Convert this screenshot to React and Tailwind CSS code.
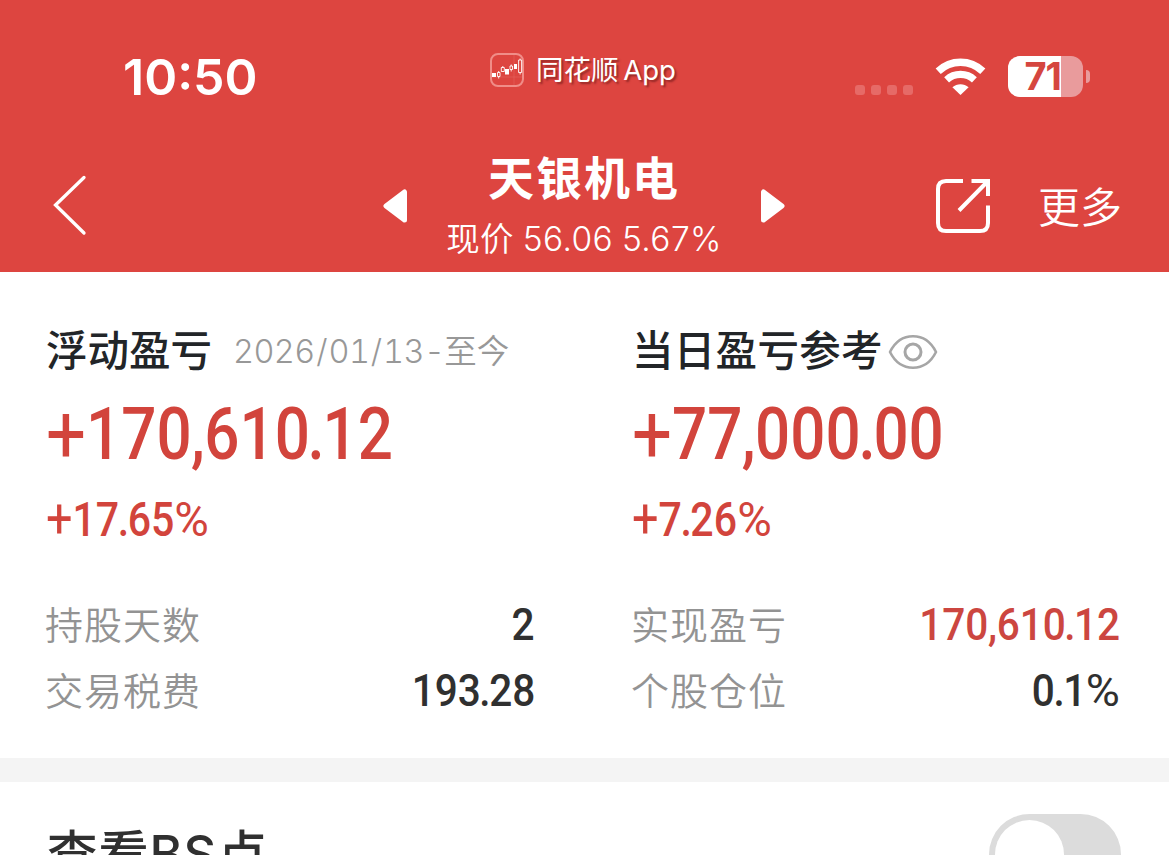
import React from 'react';

const cjk = "font-['Noto_Sans_CJK_SC',sans-serif]";
const mixed = "font-[Inter,'Noto_Sans_CJK_SC',sans-serif]";
const digits = "font-[Roboto,sans-serif]";

const charStyles = {
  '+': 'align-[-0.040em] text-[1.140em] font-normal leading-none',
  '.': '-mx-[0.036em]',
  ',': '-mx-[0.010em]',
  '%': 'inline-block w-[0.840em] origin-left scale-x-[1.150] font-normal',
};

// Narrow punctuation and wide signs around fixed width figures
function Figures({ value }) {
  return value.split('').map((char, i) => (
    <span key={i} className={charStyles[char]}>
      {char}
    </span>
  ));
}

function AppBadge() {
  return (
    <svg className="h-[34px] w-[34px]" viewBox="0 0 34 34" fill="none">
      <rect x="1" y="1" width="32" height="32" rx="7" stroke="#f08d88" strokeWidth="2" />
      <path d="M2 24H32M24 2V32" stroke="#e66660" strokeWidth="0.5" />
      <path d="M2 20h4v4H2zM15 16h4v5.500h-4zM24 11h3v5h-3z" fill="#fff" />
      <path d="M7.500 19.500h2.500v4H7.500zM8.700 18v1.500M8.700 23.500v2M11.300 14.500h3v4h-3zM12.800 13v1.500M20 13h2.500v3.500H20zM21.200 11.500v1.500M21.200 16.500v2M28.600 7h3v12.500h-3zM30.100 5.500v1.500M30.100 19.500v2" stroke="#fff" strokeWidth="0.9" />
    </svg>
  );
}

function WifiIcon() {
  return (
    <svg className="h-[38px] w-[51px]" viewBox="0 0 51 38" fill="none">
      <path d="M3.200 13.200C16 1.300 35 1.300 47.800 13.200" stroke="#fff" strokeWidth="7.500" />
      <path d="M11.600 21.800C19.500 14.600 31.500 14.600 39.400 21.800" stroke="#fff" strokeWidth="7.200" />
      <path d="M25.500 37L17.400 29.200C22 25.300 29 25.300 33.600 29.200Z" fill="#fff" />
    </svg>
  );
}

function Battery() {
  return (
    <div className="flex items-center">
      <div className="flex h-[41px] w-[75px] items-center rounded-[12px] bg-[#e99b9c]">
        <div className="flex h-full w-[53px] items-center justify-end rounded-l-[12px] bg-white">
          <span className="font-[Inter,sans-serif] text-[38px] font-bold leading-[41px] tracking-[-1px] text-[#d5463f]">71</span>
        </div>
      </div>
      <div className="ml-[3px] h-[13px] w-[4px] rounded-r-full bg-[#e99b9c]" />
    </div>
  );
}

function StatusBar() {
  return (
    <div className="flex h-[140px] items-center pl-[123px] pr-[79px] pt-[13px]">
      <div className="w-[367px] font-[Inter,sans-serif] text-[50px] font-semibold leading-none">10:50</div>
      <div className="mb-[14px] flex w-[365px] items-center">
        <AppBadge />
        <span className={`${mixed} ml-[12px] mt-px whitespace-nowrap text-[27.500px] leading-[34px] [word-spacing:-3px] [text-shadow:2px_2px_2px_rgba(100,20,20,0.6)]`}>
          同花顺 App
        </span>
      </div>
      <div className="mt-[27px] flex gap-[6px]">
        {[0, 1, 2, 3].map((dot) => (
          <div key={dot} className="h-[10px] w-[10px] rounded-[3px] bg-[#e66a67]" />
        ))}
      </div>
      <div className="ml-[22px]">
        <WifiIcon />
      </div>
      <div className="ml-[22px]">
        <Battery />
      </div>
    </div>
  );
}

function NavBar() {
  return (
    <div className="flex h-[132px] items-center">
      <svg className="ml-[52px] h-[62px] w-[36px]" viewBox="0 0 36 62" fill="none">
        <path d="M32 2.500L3.500 30L32 58" stroke="#fff" strokeWidth="3.300" strokeLinecap="round" />
      </svg>
      <svg className="ml-[295px] h-[34px] w-[25px]" viewBox="0 0 25 34">
        <path d="M3 17L21.500 3V31Z" fill="#fff" stroke="#fff" strokeWidth="5" strokeLinejoin="round" />
      </svg>
      <div className="flex w-[352px] flex-col items-center">
        <div className={`${cjk} h-[60px] text-[46px] font-bold leading-[56px] tracking-[2px]`}>天银机电</div>
        <div className={`${mixed} h-[58px] whitespace-nowrap text-[33.500px] font-[350] leading-[65px] tracking-[0.400px] [word-spacing:-1px]`}>
          现价 56.06 5.67%
        </div>
      </div>
      <svg className="h-[34px] w-[25px]" viewBox="0 0 25 34">
        <path d="M22 17L3.500 3V31Z" fill="#fff" stroke="#fff" strokeWidth="5" strokeLinejoin="round" />
      </svg>
      <svg className="ml-[150px] h-[56px] w-[56px]" viewBox="0 0 56 56" fill="none">
        <path d="M28 3H11Q3 3 3 11V45Q3 53 11 53H45Q53 53 53 45V27.500M36.500 3H53V18M53 3L24 32.500" stroke="#fff" strokeWidth="4" />
      </svg>
      <div className={`${cjk} -mt-[2px] ml-[47px] text-[42px] font-[350] leading-[60px]`}>更多</div>
    </div>
  );
}

function EyeIcon() {
  return (
    <svg className="h-[36px] w-[50px]" viewBox="0 0 50 36" fill="none" stroke="#a6a6a6" strokeWidth="2.600">
      <path d="M2 18C7 8 15 2.300 25 2.300S43 8 48 18C43 28 35 33.700 25 33.700S7 28 2 18Z" strokeLinejoin="round" />
      <circle cx="25" cy="18" r="8" strokeWidth="3" />
    </svg>
  );
}

function Profit({ amount, percent }) {
  return (
    <div className={`${digits} font-medium text-[#d2443c]`}>
      <div className="h-[100px] origin-left scale-x-[0.860] whitespace-nowrap text-[72px] leading-[102px]">
        <Figures value={amount} />
      </div>
      <div className="h-[72px] origin-left scale-x-[0.855] whitespace-nowrap text-[48px] leading-[72px]">
        <Figures value={percent} />
      </div>
    </div>
  );
}

function Row({ label, value, red }) {
  return (
    <div className="flex h-[66px] items-center justify-between">
      <span className={`${cjk} -ml-px pb-[5px] text-[38px] font-[350] leading-[60px] tracking-[1px] text-[#939393]`}>{label}</span>
      <span className={`${digits} origin-right scale-x-[0.900] text-[45px] font-medium leading-[66px] ${red ? 'text-[#cc4640]' : 'text-[#303030]'}`}>
        <Figures value={value} />
      </span>
    </div>
  );
}

export default function App() {
  return (
    <div className="flex h-[855px] w-[1169px] flex-col overflow-hidden bg-white">
      <header className="h-[272px] shrink-0 bg-[#dd4540] text-white">
        <StatusBar />
        <NavBar />
      </header>

      <main className="flex h-[486px] shrink-0 pl-[46px] pr-[49px] pt-[48px]">
        <section className="w-[489px]">
          <div className="flex h-[64px] items-center">
            <span className={`${cjk} pb-[7px] text-[41.500px] font-medium text-[#222528]`}>浮动盈亏</span>
            <span className={`${mixed} ml-[21px] mt-px whitespace-nowrap text-[32.500px] font-[350] tracking-[-0.600px] text-[#989898] tabular-nums`}>
              2026<span className="mx-[1.500px]">/</span>01<span className="mx-[1.500px]">/</span>13-<span className="tracking-normal">至今</span>
            </span>
          </div>
          <Profit amount="+170,610.12" percent="+17.65%" />
          <div className="mt-[36px]">
            <Row label="持股天数" value="2" />
            <Row label="交易税费" value="193.28" />
          </div>
        </section>

        <section className="ml-[97px] w-[488px]">
          <div className="flex h-[64px] items-center">
            <span className={`${cjk} pb-[7px] text-[41.500px] font-medium tracking-[0.300px] text-[#222528]`}>当日盈亏参考</span>
            <span className="ml-[5px]">
              <EyeIcon />
            </span>
          </div>
          <Profit amount="+77,000.00" percent="+7.26%" />
          <div className="mt-[36px]">
            <Row label="实现盈亏" value="170,610.12" red />
            <Row label="个股仓位" value="0.1%" />
          </div>
        </section>
      </main>

      <div className="h-[24px] shrink-0 bg-[#f4f4f4]" />

      {/* Trade point switch */}
      <div className="flex h-[145px] shrink-0 items-center justify-between pl-[47px] pr-[48px]">
        <span className={`${mixed} pb-[2px] text-[50.500px] font-medium tracking-[0.800px] text-[#303030]`}>查看BS点</span>
        <div className="flex h-[81px] w-[132px] items-center rounded-full bg-[#dcdcdc] p-[6px]">
          <div className="h-[69px] w-[69px] rounded-full bg-white" />
        </div>
      </div>
    </div>
  );
}
